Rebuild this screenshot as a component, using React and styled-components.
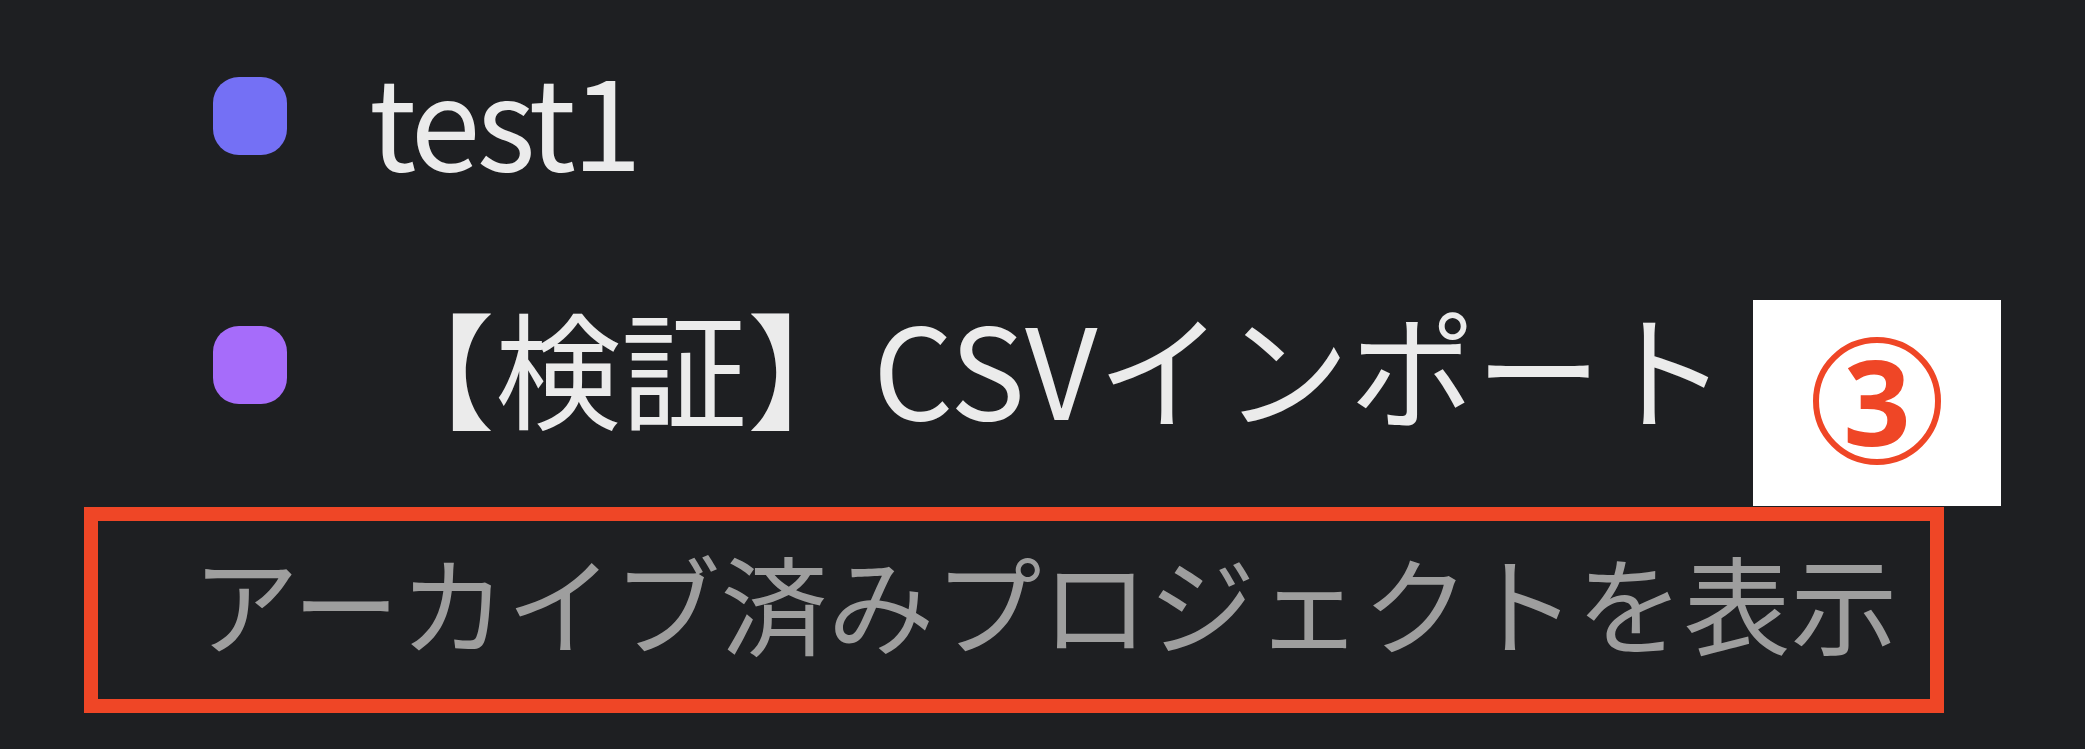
import styled, { createGlobalStyle } from "styled-components";

const GlobalStyle = createGlobalStyle`
  html, body {
    margin: 0;
    padding: 0;
    background: #1e1f22;
  }
  body {
    font-family: "Noto Sans CJK JP", "Noto Sans", sans-serif;
  }
`;

const Page = styled.div`
  position: relative;
  width: 2085px;
  height: 749px;
  box-sizing: border-box;
  padding: 16px 0 0 84px;
  background: #1e1f22;
  overflow: hidden;
`;

const List = styled.ul`
  list-style: none;
  margin: 0 0 0 129px;
  padding: 0;
  display: flex;
  flex-direction: column;
  gap: 49px;
`;

const Item = styled.li`
  display: flex;
  align-items: center;
  height: 200px;
  gap: 82px;
`;

const Dot = styled.span`
  flex: none;
  width: 74px;
  height: 78px;
  border-radius: 26px;
  background: ${(p) => p.color};
`;

const Name = styled.span`
  font-size: 126px;
  line-height: 200px;
  letter-spacing: ${(p) => (p.tight ? "-4px" : "0")};
  color: #ebebeb;
  white-space: nowrap;
`;

const ArchiveButton = styled.button`
  display: flex;
  align-items: center;
  box-sizing: border-box;
  width: 1860px;
  height: 206px;
  margin-top: 42px;
  padding: 0 0 20px 94px;
  border: 14px solid #ef4626;
  background: transparent;
  font-family: inherit;
  font-size: 107px;
  color: #9e9e9e;
  white-space: nowrap;
  cursor: pointer;
`;

const Badge = styled.div`
  position: absolute;
  left: 1753px;
  top: 300px;
  width: 248px;
  height: 206px;
  background: #fff;
  display: flex;
  align-items: center;
  justify-content: center;
  padding-bottom: 4px;
  box-sizing: border-box;
`;

const Circled = styled.span`
  width: 128px;
  height: 128px;
  box-sizing: border-box;
  border: 6px solid #ef4626;
  border-radius: 50%;
  display: flex;
  align-items: center;
  justify-content: center;
  color: #ef4626;
  font-family: "Noto Sans", "Noto Sans CJK JP", sans-serif;
  font-weight: 700;
  font-size: 118px;
  line-height: 1;
`;

const projects = [
  { name: "test1", color: "#7470f5", tight: true },
  { name: "【検証】CSVインポート", color: "#a66cfa" },
];

export default function App() {
  return (
    <>
      <GlobalStyle />
      <Page>
        <List>
          {projects.map((p) => (
            <Item key={p.name}>
              <Dot color={p.color} />
              <Name tight={p.tight}>{p.name}</Name>
            </Item>
          ))}
        </List>
        <ArchiveButton>アーカイブ済みプロジェクトを表示</ArchiveButton>
        <Badge>
          <Circled>3</Circled>
        </Badge>
      </Page>
    </>
  );
}
